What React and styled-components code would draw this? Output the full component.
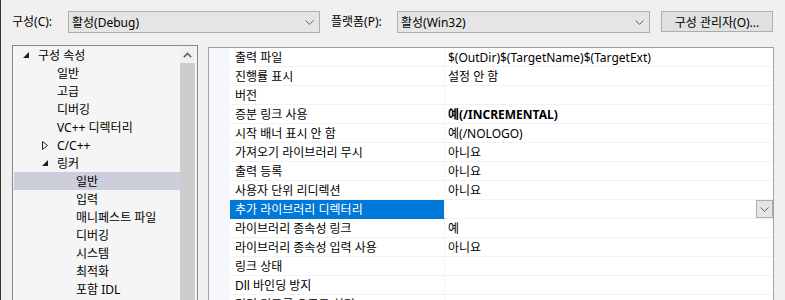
import React from "react";
import styled, { createGlobalStyle } from "styled-components";

const GlobalStyle = createGlobalStyle`
  html, body {
    margin: 0;
    padding: 0;
    background: #f0f0f0;
    overflow: hidden;
  }
  body {
    font-family: "Noto Sans", "Noto Sans CJK KR", sans-serif;
    font-size: 12px;
    color: #000;
    border-left: 1px solid #2d3a33;
  }
`;

const Page = styled.div`
  height: 300px;
  display: flex;
  flex-direction: column;
`;

const TopBar = styled.div`
  display: flex;
  align-items: center;
  padding: 11px 0 0 11px;
  height: 22px;
`;

const Label = styled.span`
  width: ${(p) => p.w}px;
  line-height: 22px;
  white-space: nowrap;
`;

const Combo = styled.div`
  box-sizing: border-box;
  width: ${(p) => p.w}px;
  height: 22px;
  border: 1px solid #adadad;
  background: #e5e5e5;
  display: flex;
  align-items: center;
  justify-content: space-between;
  padding: 0 5px 0 3px;
  margin-right: ${(p) => p.mr}px;
  white-space: nowrap;
`;

const Button = styled.div`
  box-sizing: border-box;
  width: 112px;
  height: 21px;
  border: 1px solid #adadad;
  background: #e1e1e1;
  display: flex;
  align-items: center;
  justify-content: center;
  white-space: nowrap;
  margin-top: -1px;
`;

const Main = styled.div`
  display: flex;
  align-items: flex-start;
  margin-top: 12px;
  padding-left: 11px;
  flex: 1;
  min-height: 0;
`;

const TreePanel = styled.div`
  box-sizing: border-box;
  width: 186px;
  height: 280px;
  border: 1px solid #828790;
  background: #f5f5f5;
  display: flex;
  margin-right: 10px;
`;

const TreeList = styled.div`
  flex: 1;
`;

const TreeRow = styled.div`
  height: 18px;
  display: flex;
  align-items: center;
  margin-left: 1px;
  padding-left: ${(p) => p.indent}px;
  background: ${(p) => (p.selected ? "#cccedb" : "transparent")};
  white-space: nowrap;
`;

const Toggle = styled.span`
  width: 15px;
  display: inline-flex;
  align-items: center;
  justify-content: flex-start;
`;

const ScrollBar = styled.div`
  width: 15px;
  margin-right: 2px;
  display: flex;
  flex-direction: column;
`;

const ScrollArrow = styled.div`
  height: 17px;
  display: flex;
  align-items: center;
  justify-content: center;
  background: #f0f0f0;
`;

const ScrollThumb = styled.div`
  flex: 1;
  background: #cdcdcd;
`;

const GridPanel = styled.div`
  box-sizing: border-box;
  width: 566px;
  height: 280px;
  margin-top: 2px;
  border: 1px solid #a0a0a0;
  border-bottom: none;
  background: #ffffff;
  display: flex;
  flex-direction: column;
`;

const GridRow = styled.div`
  display: grid;
  grid-template-columns: 21px 215px 1fr;
  height: 19px;
  flex-shrink: 0;
`;

const Gutter = styled.div`
  background: #f5f7fc;
`;

const NameCell = styled.div`
  box-sizing: border-box;
  display: flex;
  align-items: center;
  padding-left: 5px;
  border-bottom: 1px solid ${(p) => (p.selected ? "#0078d7" : "#f0f2f6")};
  border-right: 1px solid #f0f2f6;
  background: ${(p) => (p.selected ? "#0078d7" : "#ffffff")};
  color: ${(p) => (p.selected ? "#ffffff" : "#000000")};
  white-space: nowrap;
`;

const ValueCell = styled.div`
  box-sizing: border-box;
  display: flex;
  align-items: center;
  justify-content: space-between;
  padding-left: 3px;
  border-bottom: 1px solid #f0f2f6;
  font-weight: ${(p) => (p.bold ? 700 : 400)};
  white-space: nowrap;
`;

const DropButton = styled.div`
  box-sizing: border-box;
  width: 17px;
  height: 18px;
  border: 1px solid #adadad;
  background: #e5e5e5;
  display: flex;
  align-items: center;
  justify-content: center;
`;

const Chevron = ({ w = 9, h = 5 }) => (
  <svg width={w} height={h} viewBox="0 0 9 5">
    <path d="M0.5 0.5 L4.5 4.3 L8.5 0.5" fill="none" stroke="#606060" strokeWidth="1" />
  </svg>
);

const Expanded = () => (
  <svg width="6" height="6" viewBox="0 0 6 6">
    <path d="M6 0 L6 6 L0 6 Z" fill="#1e1e1e" />
  </svg>
);

const Collapsed = () => (
  <svg width="6" height="9" viewBox="0 0 6 9">
    <path d="M0.5 0.5 L5.5 4.5 L0.5 8.5 Z" fill="none" stroke="#1e1e1e" strokeWidth="1" />
  </svg>
);

const tree = [
  { label: "구성 속성", level: 0, state: "open" },
  { label: "일반", level: 1 },
  { label: "고급", level: 1 },
  { label: "디버깅", level: 1 },
  { label: "VC++ 디렉터리", level: 1 },
  { label: "C/C++", level: 1, state: "closed" },
  { label: "링커", level: 1, state: "open" },
  { label: "일반", level: 2, selected: true },
  { label: "입력", level: 2 },
  { label: "매니페스트 파일", level: 2 },
  { label: "디버깅", level: 2 },
  { label: "시스템", level: 2 },
  { label: "최적화", level: 2 },
  { label: "포함 IDL", level: 2 },
];

const props = [
  { name: "출력 파일", value: "$(OutDir)$(TargetName)$(TargetExt)" },
  { name: "진행률 표시", value: "설정 안 함" },
  { name: "버전", value: "" },
  { name: "증분 링크 사용", value: "예(/INCREMENTAL)", bold: true },
  { name: "시작 배너 표시 안 함", value: "예(/NOLOGO)" },
  { name: "가져오기 라이브러리 무시", value: "아니요" },
  { name: "출력 등록", value: "아니요" },
  { name: "사용자 단위 리디렉션", value: "아니요" },
  { name: "추가 라이브러리 디렉터리", value: "", selected: true },
  { name: "라이브러리 종속성 링크", value: "예" },
  { name: "라이브러리 종속성 입력 사용", value: "아니요" },
  { name: "링크 상태", value: "" },
  { name: "Dll 바인딩 방지", value: "" },
  { name: "링커 경고를 오류로 처리", value: "" },
];

const App = () => (
  <Page>
    <GlobalStyle />
    <TopBar>
      <Label w={56}>구성(C):</Label>
      <Combo w={252} mr={11}>
        <span>활성(Debug)</span>
        <Chevron />
      </Combo>
      <Label w={66}>플랫폼(P):</Label>
      <Combo w={253} mr={11}>
        <span>활성(Win32)</span>
        <Chevron />
      </Combo>
      <Button>구성 관리자(O)...</Button>
    </TopBar>
    <Main>
      <TreePanel>
        <TreeList>
          {tree.map((t, i) => (
            <TreeRow key={i} indent={9 + t.level * 19} selected={t.selected}>
              <Toggle>
                {t.state === "open" && <Expanded />}
                {t.state === "closed" && <Collapsed />}
              </Toggle>
              {t.label}
            </TreeRow>
          ))}
        </TreeList>
        <ScrollBar>
          <ScrollArrow>
            <svg width="9" height="6" viewBox="0 0 9 6">
              <path d="M0.8 5.2 L4.5 1.5 L8.2 5.2" fill="none" stroke="#606060" strokeWidth="1.6" />
            </svg>
          </ScrollArrow>
          <ScrollThumb />
        </ScrollBar>
      </TreePanel>
      <GridPanel>
        {props.map((p, i) => (
          <GridRow key={i}>
            <Gutter />
            <NameCell selected={p.selected}>{p.name}</NameCell>
            <ValueCell bold={p.bold}>
              <span>{p.value}</span>
              {p.selected && (
                <DropButton>
                  <Chevron />
                </DropButton>
              )}
            </ValueCell>
          </GridRow>
        ))}
      </GridPanel>
    </Main>
  </Page>
);

export default App;
